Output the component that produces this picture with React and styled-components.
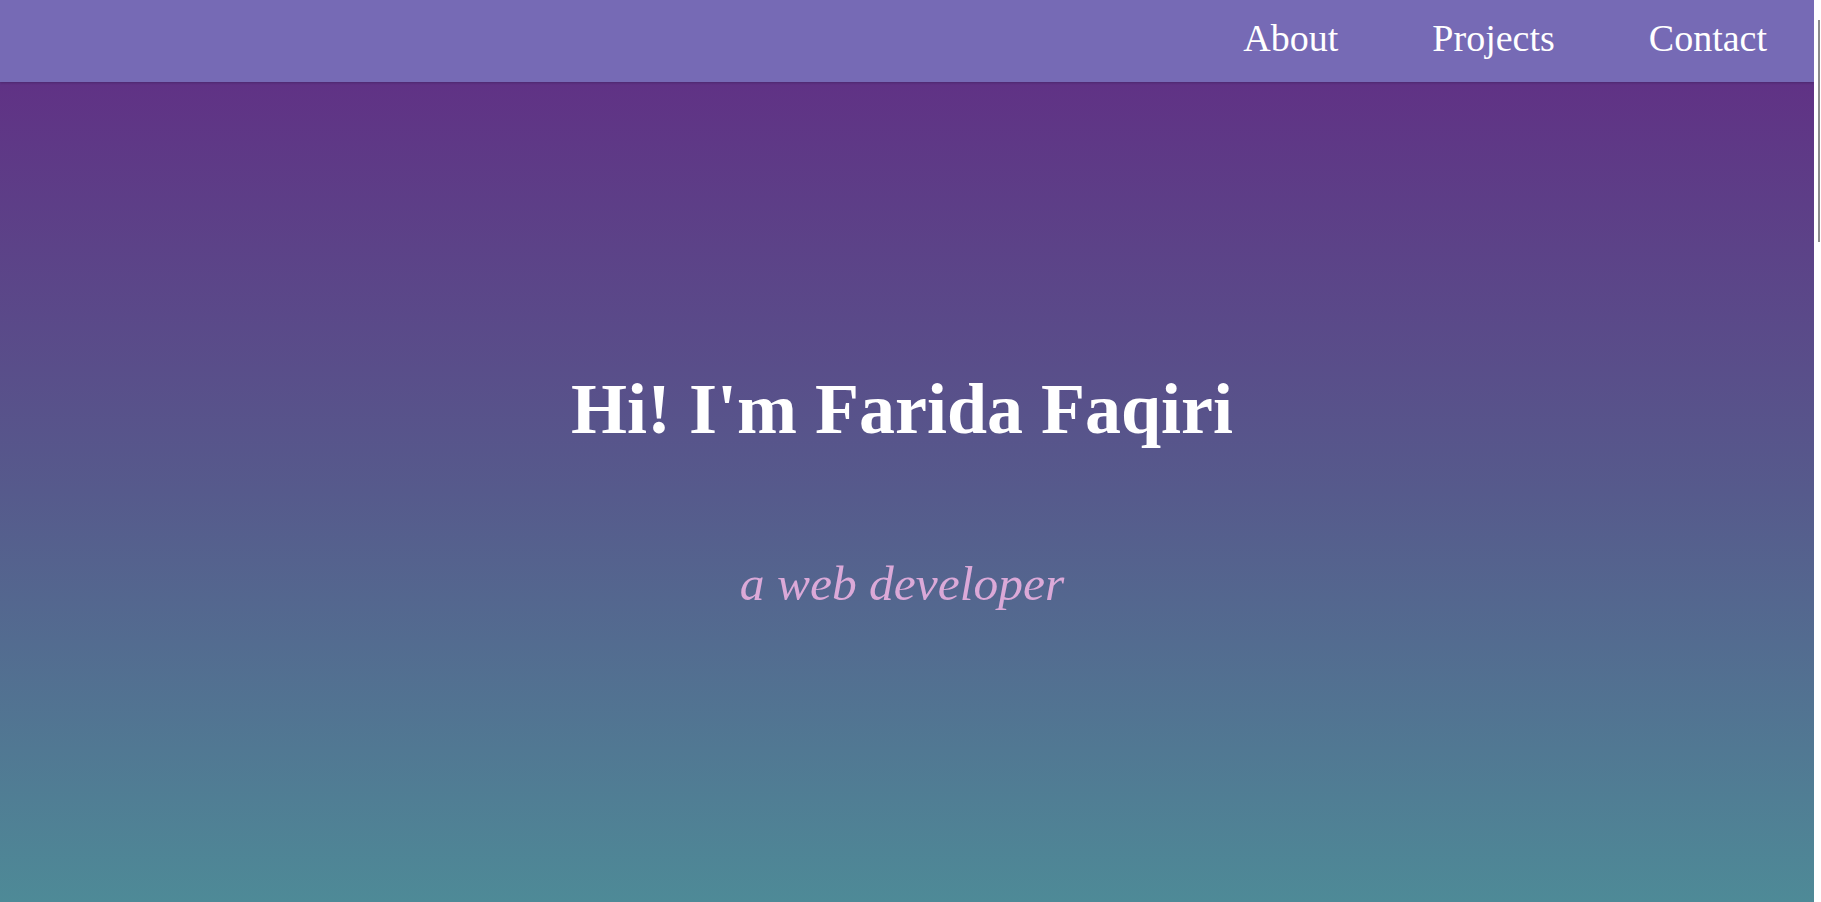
import React from "react";
import styled, { createGlobalStyle } from "styled-components";

const GlobalStyle = createGlobalStyle`
  html, body {
    margin: 0;
    padding: 0;
  }
  body {
    margin-right: 7px;
    font-family: "Liberation Serif", "Times New Roman", serif;
    background-color: #4e8a97;
  }
`;

// thin scrollbar as seen in the screenshot
const ScrollTrack = styled.div`
  position: fixed;
  top: 0;
  right: 0;
  width: 7px;
  height: 100vh;
  background: #ffffff;
  z-index: 10;
`;

const ScrollThumb = styled.div`
  position: absolute;
  top: 20px;
  left: 4px;
  width: 2px;
  height: 222px;
  background: #8c8c8c;
`;

const NavBar = styled.nav`
  height: 82px;
  box-sizing: border-box;
  padding-bottom: 6px;
  display: flex;
  align-items: center;
  justify-content: flex-end;
  background-color: #766ab5;
  box-shadow: 0 1px 2px rgba(40, 20, 70, 0.35);
  position: relative;
  z-index: 2;
`;

const NavLink = styled.a`
  font-size: 38px;
  line-height: 1;
  color: #ffffff;
  text-decoration: none;
  padding: 0 47px;
  cursor: pointer;
`;

const Hero = styled.header`
  height: calc(100vh - 82px);
  box-sizing: border-box;
  padding: 0 10px 2px 0;
  display: flex;
  flex-direction: column;
  align-items: center;
  justify-content: center;
  gap: 114px;
  background: linear-gradient(to bottom, #603285 0%, #565a8c 50%, #4e8a97 100%);
`;

const Title = styled.h1`
  margin: 0;
  font-size: 72px;
  line-height: 1;
  font-weight: 700;
  color: #ffffff;
`;

const Subtitle = styled.p`
  margin: 0;
  font-size: 49.5px;
  line-height: 1;
  font-style: italic;
  color: #dba9d8;
`;

const Section = styled.section`
  height: 2800px;
  background-color: #4e8a97;
`;

export default function App() {
  return (
    <>
      <GlobalStyle />
      <ScrollTrack>
        <ScrollThumb />
      </ScrollTrack>
      <NavBar>
        <NavLink href="#about">About</NavLink>
        <NavLink href="#projects">Projects</NavLink>
        <NavLink href="#contact">Contact</NavLink>
      </NavBar>
      <Hero>
        <Title>Hi! I'm Farida Faqiri</Title>
        <Subtitle>a web developer</Subtitle>
      </Hero>
      <Section id="about" />
    </>
  );
}
